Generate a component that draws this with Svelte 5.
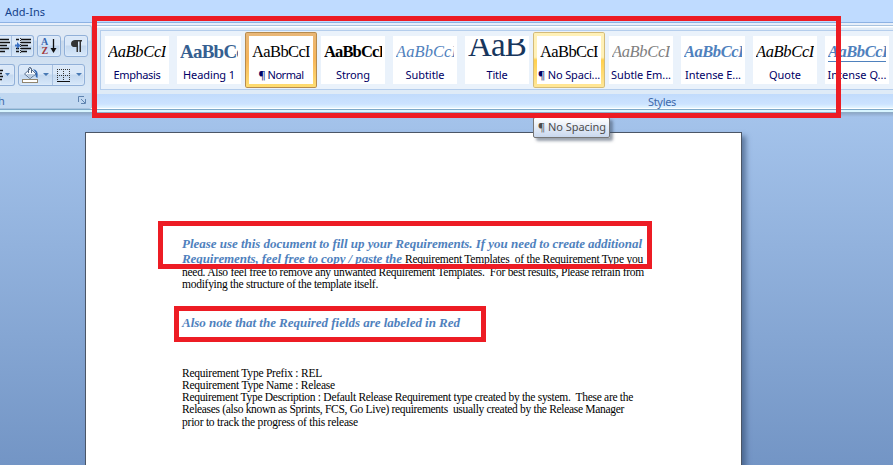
<script>
  const styles = [
    { name: 'Emphasis', w: 47, kind: 'italic' },
    { name: 'Heading 1', w: 52, kind: 'heading', text: 'AaBbCc', sw: 64 },
    { name: '¶ Normal', w: 45, kind: 'normal', state: 'selected' },
    { name: 'Strong', w: 34, kind: 'strong', sw: 60 },
    { name: 'Subtitle', w: 39, kind: 'subtitle', sw: 61 },
    { name: 'Title', w: 21, kind: 'title', text: 'AaB', sw: 58 },
    { name: '¶ No Spaci...', w: 62, kind: 'normal', state: 'hover' },
    { name: 'Subtle Em...', w: 60, kind: 'subtle' },
    { name: 'Intense E...', w: 56, kind: 'intense', sw: 60 },
    { name: 'Quote', w: 32, kind: 'italic' },
    { name: 'Intense Q...', w: 59, kind: 'intense underlined', sw: 60 }
  ];

  // Spreads the letters of one line so that it fills the given measure.
  function fit(node, width) {
    node.style.letterSpacing = '0px';
    const natural = node.getBoundingClientRect().width;
    node.style.letterSpacing = (width - natural) / node.textContent.length + 'px';
  }
</script>

<div class="window">
  <nav class="tabs"><span use:fit={40}>Add-Ins</span></nav>
  <section class="ribbon">
    <div class="paragraph">
      <div class="tools">
        <div class="row">
          <div class="button indent">
            <svg width="34" height="20">
              <path d="M0 3.500h9M0 6.500h10M0 9.500h7M0 12.500h9M0 15.500h5M16 3.500h3M21 3.500h10M21 6.500h10M21 9.500h7M16 12.500h3M21 12.500h10M16 15.500h3M21 15.500h6" stroke="#111" stroke-width="1.500"/>
              <path d="M20.500 2v16" stroke="#333" stroke-dasharray="1 1"/>
              <path d="M11.500 0v20" stroke="#a9c1df"/><path d="M15 8.500h2V6l3.500 3.500L17 13v-2.500h-2z" fill="#3970c3"/>
            </svg>
          </div>
          <div class="button sort">
            <svg width="22" height="20"><text x="3" y="9" class="az blue">A</text><text x="3.500" y="17.500" class="az red">Z</text><path d="M15.500 3v12" stroke="#111" stroke-width="1.300"/><path d="M12.500 12h6l-3 5z" fill="#111"/></svg>
          </div>
          <div class="button mark">
            <svg width="22" height="20"><path d="M6 8C6 5 8 4 10 4h7v1.500h-1V16h-1.500V5.500H13V16h-1.500v-5H10C8 11 6 10.500 6 8z" fill="#333"/></svg>
          </div>
        </div>
        <div class="row lower">
          <div class="button spacing">
            <svg width="15" height="20"><path d="M0 5.500h3M0 8.500h2M0 11.500h3M0 14.500h2" stroke="#111" stroke-width="1.300"/><path d="M5 8h5l-2.500 3z" fill="#4879b4"/></svg>
          </div>
          <div class="button fill">
            <svg width="66" height="20">
              <path d="M5.500 9l6-5.500 5.500 5.500-6 4.500z" fill="#f8fbff" stroke="#566f91"/><path d="M9.500 8V3.500q1.500-2.500 3 0V8" fill="none" stroke="#52657e"/><path d="M14 4q6 1 4.500 9-3-1-1.500-5z" fill="#3269b4"/><path d="M7 9h9l-5 4z" fill="#b8cbe0"/>
              <rect x="3.500" y="14.500" width="15" height="3" fill="#fff" stroke="#92866f"/>
              <path d="M24 8h6l-3 3zM57 8h6l-3 3z" fill="#4879b4"/><path d="M33.500 0v20" stroke="#a9c1df"/>
              <path d="M38.500 4v12M44.500 4v12M50.500 4v12M38 4.500h13M38 10.500h13" stroke="#333" stroke-dasharray="1 1"/><path d="M38 16.500h13" stroke="#111"/>
            </svg>
          </div>
        </div>
      </div>
      <footer class="caption"><span>h</span>
        <svg width="8" height="8" fill="none" stroke="#5f83af"><path d="M.5 6V.5H6"/><path d="M3 3l4 4"/><path d="M7.500 3v4.500H3"/></svg>
      </footer>
    </div>
    <div class="styles">
      <div class="gallery">
        {#each styles as s}
          <div class="style {s.state ?? ''}">
            <div class="sample {s.kind}"><span use:fit={s.sw ?? 58}>{s.text ?? 'AaBbCcI'}</span></div>
            <div class="name"><span use:fit={s.w}>{s.name}</span></div>
          </div>
        {/each}
      </div>
      <footer class="styles-caption"><span use:fit={28}>Styles</span></footer>
    </div>
  </section>
  <main class="desk">
    <article class="page">
      <p class="accent"><span use:fit={460}>Please use this document to fill up your Requirements. If you need to create additional</span></p>
      <p class="mixed"><b class="accent-text" use:fit={223}>Requirements, feel free to copy / paste the&nbsp;</b><span use:fit={238}>Requirement Templates&nbsp; of the Requirement Type you</span></p>
      <p><span use:fit={462}>need. Also feel free to remove any unwanted Requirement Templates.&nbsp; For best results, Please refrain from</span></p>
      <p><span use:fit={196}>modifying the structure of the template itself.</span></p>
      <p class="accent note"><span use:fit={278}>Also note that the Required fields are labeled in Red</span></p>
      <p class="details"><span use:fit={140}>Requirement Type Prefix : REL</span></p>
      <p><span use:fit={153}>Requirement Type Name : Release</span></p>
      <p><span use:fit={451}>Requirement Type Description : Default Release Requirement type created by the system.&nbsp; These are the</span></p>
      <p class="after"><span use:fit={442}>Releases (also known as Sprints, FCS, Go Live) requirements&nbsp; usually created by the Release Manager</span></p>
      <p><span use:fit={176}>prior to track the progress of this release</span></p>
    </article>
  </main>
  <div class="tooltip"><span use:fit={68}>¶ No Spacing</span></div>
  <div class="outline gallery-outline"></div>
  <div class="outline intro-outline"></div>
  <div class="outline note-outline"></div>
</div>

<style>
  .window { position: relative; width: 893px; height: 465px; overflow: hidden; display: flex; flex-direction: column; font-family: "Noto Sans", sans-serif; font-size: 11px; background: #bfdbff; }
  .window * { box-sizing: border-box; }
  span, b { white-space: pre; }
  .tabs { flex: none; height: 22px; padding: 4px 0 0 5px; line-height: 16px; color: #15428b; }
  .ribbon { height: 91px; flex: none; display: flex; border-top: 1px solid #8db2e3; background: linear-gradient(#e7effa 0 2px, #d9e6f4 2px 71px, #c2d9f3 71px 85px, #fff 85px 86px, #7da9c9 86px 87px, #d8f5ff 87px 89px, #8facc7 89px); }
  .paragraph { width: 92px; height: 84px; margin-top: 2px; border: 1px solid #a8c3df; border-left: 0; border-radius: 0 3px 3px 0; background: linear-gradient(#dfe9f5 0 14px, #c9daed 15px, #dceaf8 67px); overflow: hidden; display: flex; flex-direction: column; }
  .tools { height: 68px; padding-top: 9px; }
  .row { display: flex; gap: 3px; height: 22px; }
  .lower { margin-top: 7px; }
  .button { height: 22px; border: 1px solid #91b0d8; border-radius: 3px; background: linear-gradient(#dae8f8 0 9px, #c4d8ef 10px, #d7e8fa); box-shadow: inset 0 0 0 1px #e1edfa88; overflow: hidden; }
  .button svg { display: block; }
  .indent { width: 34px; border-left: 0; border-radius: 0 3px 3px 0; }
  .sort { width: 24px; }
  .mark { width: 24px; }
  .spacing { width: 15px; border-left: 0; border-radius: 0 3px 3px 0; }
  .fill { width: 67px; }
  .az { font: bold 10px "Liberation Serif", serif; }
  .blue { fill: #3765ae; }
  .red { fill: #a23a3e; }
  .caption { height: 15px; display: flex; justify-content: space-between; align-items: center; padding: 0 5px 1px 0; color: #3e6aaa; background: #c1d8f1; }
  .caption span { margin-left: -2px; }
  .styles { flex: 1; min-width: 0; margin: 2px 0 0 5px; padding-top: 1px; border-top: 1px solid #a8c3df; background: linear-gradient(#fff 0 1px, #dfebf7 2px 68px, #c1dbfc 68px, #cce3ff 78px, #e4f5ff 82px, transparent 82px); }
  .gallery { margin: 3px 0 0 3px; height: 60px; border: 1px solid #b4cdec; border-right: 0; background: #eaf2fb; display: flex; gap: 8px; padding: 5px 0 0 4px; overflow: hidden; }
  .style { width: 64px; height: 48px; flex: none; background: #fff; overflow: hidden; display: flex; flex-direction: column; }
  .sample { flex: none; height: 28px; margin: 3px 3px 0; line-height: 26px; font-family: "Liberation Serif", serif; font-size: 16.500px; color: #000; overflow: hidden; white-space: nowrap; }
  .name { height: 16px; line-height: 16px; text-align: center; color: #000066; white-space: nowrap; }
  .italic { font-style: italic; }
  .heading { color: #365f91; font-weight: bold; font-size: 19px; }
  .strong { font-weight: bold; }
  .subtitle { color: #4f81bd; font-style: italic; }
  .title { color: #17365d; font-size: 33px; line-height: 13px; }
  .subtle { color: #808080; font-style: italic; }
  .intense { color: #4f81bd; font-style: italic; font-weight: bold; }
  .underlined { height: 23px; border-bottom: 1px solid #4f81bd; margin-bottom: 5px; }
  .selected, .hover { width: 72px; height: 56px; margin: -4px; padding: 4px; position: relative; border-radius: 2px; background: linear-gradient(#fff, #fff) content-box, linear-gradient(#e8b779, #f6b55b 48%, #ffdf72); box-shadow: inset 0 0 0 1px #b68b4f; }
  .hover { background: linear-gradient(#fff, #fff) content-box, linear-gradient(#fff1b8 45%, #ffd04e 50%, #ffe89b); box-shadow: inset 0 0 0 1px #d3bb7a; }
  .styles-caption { height: 15px; margin-top: 4px; padding-left: 551px; line-height: 15px; color: #3e6aaa; }
  .desk { flex: 1; min-height: 0; padding: 19px 0 0 85px; background: linear-gradient(#8fa9c9, #a4c3eb 4px, #7395c5); }
  .page { width: 657px; height: 340px; padding: 103px 0 0 96px; border: 1px solid #4b5666; background: #fff; box-shadow: 4px 4px 5px #344d7299; font-family: "Liberation Serif", serif; font-size: 11.500px; color: #000; }
  p { margin: 0; height: 12px; line-height: 12px; white-space: nowrap; }
  .accent { height: 15px; line-height: 15px; color: #4f81bd; font-size: 13px; font-style: italic; font-weight: bold; }
  .mixed { height: 15px; line-height: 15px; }
  .accent-text { color: #4f81bd; font-size: 13px; font-style: italic; }
  .note { margin-top: 25px; }
  .details { margin-top: 37px; }
  .after { height: 13px; line-height: 13px; }
  .tooltip { position: absolute; left: 533px; top: 117px; width: 77px; height: 21px; padding-left: 4px; line-height: 18px; border: 1px solid #767676; border-radius: 2px; background: linear-gradient(#fff, #c9d8ee); color: #4c4c4c; box-shadow: 3px 3px 3px #42506588; }
  .outline { position: absolute; border: 5px solid #ed1c24; }
  .gallery-outline { left: 92px; top: 16px; width: 749px; height: 102px; }
  .intro-outline { left: 158px; top: 221px; width: 494px; height: 48px; }
  .note-outline { left: 174px; top: 306px; width: 312px; height: 36px; }
</style>
